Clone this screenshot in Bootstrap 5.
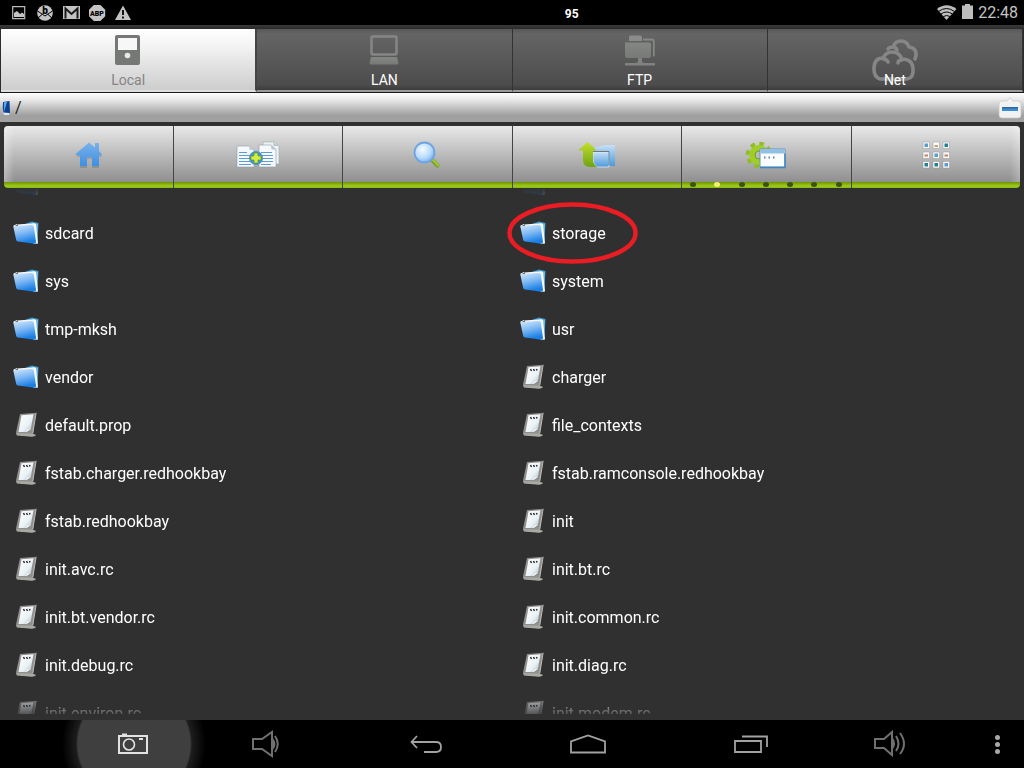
<!DOCTYPE html>
<html lang="en">
<head>
<meta charset="utf-8">
<meta name="viewport" content="width=device-width, initial-scale=1">
<title>File explorer</title>
<link href="https://cdn.jsdelivr.net/npm/bootstrap@5.3.0/dist/css/bootstrap.min.css" rel="stylesheet">
<style>
body{font-family:Roboto,"Noto Sans",sans-serif;font-size:16px;line-height:24px;color:#fff;background:#303030}
svg{display:block;flex:none}
button{border:0;padding:0;background:none;color:inherit}
.status-bar{height:25px;background:#000;color:#c4c4c4;padding:0 6px 0 11px}
.status-left{flex:0 0 55%}
.status-count{font-size:12px;font-weight:700;color:#fff;padding-top:2px}
.place-tabs{background:linear-gradient(#3a3a3a,#2c2c2c 4px,#2c2c2c);padding:4px 1px 0;border-bottom:1px solid #181818}
.place-tab{flex:1 1 0;height:63px;padding:0;font-size:14px;line-height:16px;border-right:1px solid #333;border-bottom:2px solid #999;background:linear-gradient(#575757,#656565 5px,#4c4c4c 56px,#3b3b3b)}
.place-tab.active{color:#858585;background:linear-gradient(#fff,#f2f2f2 30%,#cdcdcd);border-bottom-color:#dedede;border-right:2px solid #444}
.place-tab .glyph{height:37px}
.place-tab .tab-label{position:relative}
.path-bar{height:29px;background:linear-gradient(#fff,#e6e6e6 25%,#9f9f9f 78%,#a2a2a2);color:#222;padding:0 2px}
.tool-bar{height:62px;margin:4px 4px 0;border-radius:4px;overflow:hidden;background:linear-gradient(#e9e9e9,#8f8f8f 56px,#6f9500 56px,#9ccb1c 60px,#8ab514)}
.tool-bar button{flex:1 1 0;padding-bottom:4px;border-right:1px solid #444}
.tool-bar button:last-child{border-right:0;background:linear-gradient(90deg,transparent 94%,#ffffff40) 0 0/100% 56px no-repeat}
.tool-bar button:first-child{background:linear-gradient(90deg,#ffffff50,transparent 6%) 0 0/100% 56px no-repeat}
.pager-dots{bottom:1px;left:8px;right:9px}
.pager-dots i{width:6px;height:5px;border-radius:50%;background:#3d5210}
.pager-dots i.on{background:#f4ef72}
.file-area{margin-bottom:6px;min-height:0;padding-right:10px;-webkit-mask-image:linear-gradient(transparent,#0003 8px,#000 14px,#000 calc(100% - 26px),#0003);mask-image:linear-gradient(transparent,#0003 8px,#000 14px,#000 calc(100% - 26px),#0003)}
.file-row{height:48px;padding-left:12px}
.file-row a{color:#fff;text-decoration:none}
.file-row svg{margin:0 5px 2px 0}
.file-row.cut{height:22px;overflow:hidden}
.file-row.cut svg{margin-bottom:13px}
.file-row .ring{left:0;top:-8px;margin:0;z-index:2;pointer-events:none}
.nav-keys{height:48px;background:#000;display:grid;grid-template-columns:78fr 112fr 152fr 168fr 156fr 170fr 108fr 80fr;overflow:hidden}
.nav-keys button{height:48px}
.nav-keys .pressed{grid-column:2;background:radial-gradient(circle 76px at center,#3f3f3f 56px,#1d1d1d 58px,#000 72px);margin:0 -20px;padding-right:2px}
</style>
</head>
<body>
<svg width="0" height="0" class="position-absolute" aria-hidden="true">
<defs>
<linearGradient id="gBlue" x1="0" y1="0" x2="0.3" y2="1"><stop offset="0" stop-color="#d5e9fc"/><stop offset=".5" stop-color="#7fb9f4"/><stop offset="1" stop-color="#187fe4"/></linearGradient>
<linearGradient id="gHome" x1="0" y1="0" x2="0" y2="1"><stop offset="0" stop-color="#7ab2ea"/><stop offset="1" stop-color="#3f8fe2"/></linearGradient>
<linearGradient id="gPane" x1="0" y1="0" x2="0" y2="1"><stop offset="0" stop-color="#c5dff5"/><stop offset="1" stop-color="#4d9ada"/></linearGradient>
<linearGradient id="gGreen" x1="0" y1="0" x2="0" y2="1"><stop offset="0" stop-color="#c4e02c"/><stop offset="1" stop-color="#6ea312"/></linearGradient>
<linearGradient id="gGrey" x1="0" y1="0" x2="0" y2="1"><stop offset="0" stop-color="#858785"/><stop offset="1" stop-color="#777977"/></linearGradient>
<linearGradient id="gPaper" x1="0" y1="0" x2="1" y2="1"><stop offset="0" stop-color="#fff"/><stop offset=".6" stop-color="#eaf2f6"/><stop offset="1" stop-color="#9fb4bf"/></linearGradient>
<radialGradient id="gLens" cx=".4" cy=".35" r=".7"><stop offset="0" stop-color="#f4faff"/><stop offset=".6" stop-color="#b8dbfa"/><stop offset="1" stop-color="#6faef0"/></radialGradient>
<symbol id="folder" viewBox="0 0 28 26">
<path d="M14 3.500 20 1.500 26.500 3 25.500 22 13 18z" fill="#3f97cf"/>
<path d="M20 2.500 26 4 25 21z" fill="#6cb9e2"/>
<path d="M5 4.500 22.500 3.200 24 4 26 23.500 22 24z" fill="#f4f9fd"/>
<path d="M1.500 6 20 5Q21.500 5 21.800 6.500L24 22Q24 24 22.500 23.800L6 21.500Q4.500 21.300 4.200 20L1.500 7.500z" fill="url(#gBlue)"/>
<path d="M1.500 6 5 4.500" fill="none" stroke="#eef6fd" stroke-width="1"/>
</symbol>
<symbol id="file" viewBox="0 0 28 26">
<path d="M8 2 25 .8 23.500 3 21 21.500 24 23 22 24.500 5 23 4 20.500z" fill="#8f8f8c"/>
<path d="M9.500 3.200 21.500 2.200 18.800 17 14.500 20 6.500 20z" fill="url(#gPaper)"/>
<path d="M18.800 17Q15 17 14 20.200z" fill="#fff"/>
<path d="M4 21.300 20 21.500 24 23.300 20 24.800 5 23.500z" fill="#a9a9a6"/>
<path d="M24 1.500 20.800 21" stroke="#bdbdba" stroke-width="1"/>
</symbol>
<symbol id="script" viewBox="0 0 28 26">
<use href="#file"/>
<path d="m11.500 5 1 2m2-2 1 2m2-2 .5 1.500" stroke="#222" stroke-width="1.400"/>
</symbol>
</defs>
</svg>

<div class="d-flex flex-column vh-100 overflow-hidden">
<header class="status-bar d-flex align-items-center flex-shrink-0">
<div class="status-left d-flex align-items-center">
<svg width="125" height="20" viewBox="11 3 125 20" fill="#c4c4c4">
<path d="M12.700 6.700h12v12h-12z" fill="none" stroke="#b9b9b9" stroke-width="1.200"/><path d="M14 17v-4l3-2 3 3 2-1.500 2 1.500v3z"/>
<circle cx="45" cy="13" r="7.800"/><path d="m37.500 11 7.500 5 7.500-5M38 18l4-3.500M52 18l-4-3.500" stroke="#000" fill="none"/><text x="45" y="13.500" text-anchor="middle" font-size="10" font-weight="900" fill="#000">b</text>
<path d="M63 6h17v13H63z"/><path d="M65.500 18.500V8.500l6 5.500 6-5.500v10" fill="none" stroke="#1a1a1a" stroke-width="2"/>
<path d="M93.800 5h6.600l4.800 4.700v6.600L100.400 21h-6.600L89 16.300V9.700z"/><text x="97" y="16" text-anchor="middle" font-size="7" font-weight="900" fill="#000">ABP</text>
<path d="M123 5.500 131 20h-16z"/><path d="M123 10v5m0 1.500v2" stroke="#000" stroke-width="1.800"/>
</svg>
</div>
<span class="status-count">95</span>
<div class="ms-auto d-flex align-items-center">
<svg width="38" height="20" viewBox="935 3 38 20"><path d="M936 9Q945.500 1.500 955.500 9L945.500 20z" fill="#bdbdbd"/><path d="M937.500 11.500q8-6 16 0M940 14q5.500-4 11.500 0M942.500 16.500q3-2 6.500 0" fill="none" stroke="#000" stroke-width="1"/><path d="M961 5.500h3V4h5v1.500h3V19h-11z" fill="#bdbdbd"/></svg>
<span class="ms-1">22:48</span>
</div>
</header>

<nav class="place-tabs d-flex flex-shrink-0" aria-label="Places">
<button class="place-tab active"><span class="glyph d-flex justify-content-center pt-1"><svg width="28" height="30" viewBox="0 0 28 30"><path d="M3 0h21q2 0 2 2v26q0 2-2 2H3q-2 0-2-2V2q0-2 2-2z" fill="#767876"/><path d="M4 3h19v12H4z" fill="#f7f7f7"/><circle cx="13.500" cy="20.500" r="2.800" fill="#e9e9e9"/></svg></span><span class="tab-label d-block mt-1">Local</span></button>
<button class="place-tab"><span class="glyph d-flex justify-content-center pt-1"><svg width="30" height="30" viewBox="0 0 30 30"><rect x="2.500" y="1.500" width="25" height="18" rx="1.500" fill="none" stroke="#858785" stroke-width="2.500"/><path d="M2 22h26l1.500 6q0 1.500-1.500 1.500H2Q.5 29.500.5 28z" fill="url(#gGrey)"/></svg></span><span class="tab-label d-block mt-1">LAN</span></button>
<button class="place-tab"><span class="glyph d-flex justify-content-center pt-1"><svg width="32" height="32" viewBox="0 0 32 32"><path d="M3 6h2V2q0-1.500 2-1.500h9q2 0 2 1.500v4h-2z" fill="#8a8c8a"/><path d="M1 7.500h24q2 0 2 2V21q0 2-2 2H3q-2 0-2-2z" fill="url(#gGrey)"/><path d="M19 4.500h9q1.800 0 1.800 2v15" fill="none" stroke="#858785" stroke-width="1.800"/><path d="M14 23h4v3q0 2 2 2h11v2.500H1V28h11q2 0 2-2z" fill="#808280"/></svg></span><span class="tab-label d-block mt-1">FTP</span></button>
<button class="place-tab"><span class="glyph d-flex justify-content-center pt-2"><svg width="46" height="42" viewBox="0 0 46 42" fill="none" stroke="#868686" stroke-width="3.600" stroke-linejoin="round" stroke-linecap="round"><path d="M16 10Q17 8 21 8Q23 2 29 2Q35 2 37 8Q44 9 44 15Q44 18 43 20M21 8q3 0 4 3"/><path d="M8 40Q2 38 2 30Q2 19 11 19Q14 13 20 13Q27 13 30 20Q40 20 41 29Q42 39 35 40zM11 20q4 0 5 3M30 21q-4 0-4 3"/></svg></span><span class="tab-label d-block mt-1">Net</span></button>
</nav>

<div class="path-bar d-flex align-items-center flex-shrink-0">
<svg width="9" height="14" viewBox="0 0 9 14"><path d="M1 1 7.500 0 8 12 2 13.500Q0 7 1 1z" fill="#0d3f91"/><path d="m2 1 3 0-3 10z" fill="#56a8ee"/><path d="M1 11.500 7.500 12 7 14H2z" fill="#dce8f5"/></svg>
<span class="ms-1">/</span>
<button class="ms-auto" aria-label="Collapse"><svg width="24" height="22" viewBox="0 0 24 22"><path d="M3 4h6l3-3.500L15 4h5q3 0 3 3v11q0 3-3 3H4q-3 0-3-3V7q0-3 2-3z" fill="#f2f2f2" stroke="#c9c9c9" stroke-width=".7"/><path d="M4 10h16v4H4z" fill="#3c8dd2"/><path d="M4 10h16v1.500H4z" fill="#2f679c"/></svg></button>
</div>

<div class="tool-bar d-flex flex-shrink-0" role="toolbar" aria-label="Actions">
<button class="d-flex align-items-center justify-content-center" aria-label="Home"><svg width="28" height="28" viewBox="0 0 28 28"><path d="M2 14 15 2l6 5V2h4v8l3 4-1 1h-2v11h-7v-8q0-1-1-1h-3q-1 0-1 1v8H6V15H4z" fill="#555" opacity=".25" transform="translate(0 1)"/><path d="M1 13.500 15 1.500l6 5V2h4v8l3 3.500-1 .5h-2v11h-7v-8q0-1-1-1h-3q-1 0-1 1v8H6V14.500z" fill="url(#gHome)"/></svg></button>
<button class="d-flex align-items-center justify-content-center" aria-label="Copy"><svg width="44" height="28" viewBox="0 0 44 28"><path d="M27 1h12l4 4v18H27z" fill="#eef3f6" stroke="#9aa" stroke-width=".6"/><path d="M23 4h12l5 4.500V26H23z" fill="#f6fafc" stroke="#8e9ba6" stroke-width=".6"/><path d="m35 4 .5 4.500H40zM37 1l.5 4H43z" fill="#b9c6cf"/><path d="M1 5h12l5 4v17H1z" fill="#f4f9fc" stroke="#8e9ba6" stroke-width=".6"/><path d="m13 5 .5 4H18z" fill="#c2ced7"/><path d="M3 11.500h8M3 14.500h12M3 17.500h12M3 20.500h12M3 23.500h12M25 11.500h11M25 14.500h12M25 17.500h12M25 20.500h12M25 23.500h10" stroke="#5d9bd4" stroke-width="1"/><circle cx="20" cy="17" r="7" fill="#4b92d2"/><path d="M18 12h4v3h3v4h-3v3h-4v-3h-3v-4h3z" fill="#d3ef42" stroke="#5d9a15" stroke-width=".7"/></svg></button>
<button class="d-flex align-items-center justify-content-center" aria-label="Search"><svg width="28" height="30" viewBox="0 0 28 30"><path d="m18 19 6.500 6.500" stroke="#7ca62c" stroke-width="4.500" stroke-linecap="round"/><path d="m18.500 18.500 7 7" stroke="#a9cd40" stroke-width="1.600" stroke-linecap="round"/><circle cx="11.500" cy="12.500" r="10" fill="url(#gLens)" stroke="#6ea4e2" stroke-width="1.800"/></svg></button>
<button class="d-flex align-items-center justify-content-center" aria-label="Up one folder"><svg width="38" height="28" viewBox="0 0 38 28"><path d="M14 7 27 4h10v21h-6V9H14z" fill="url(#gPane)"/><path d="M15 11h16v15H19q-4-3-4-8z" fill="url(#gPane)" stroke="#eaf4fc" stroke-width=".7"/><path d="M15 10.500h16V24" fill="none" stroke="#59809b" stroke-width="1"/><path d="M0 9.500 9.500 1 19 9.500h-4V19q0 4 4 7h-7q-7 0-7-7V9.500z" fill="url(#gGreen)"/></svg></button>
<button class="position-relative d-flex align-items-center justify-content-center" aria-label="Settings"><svg width="42" height="28" viewBox="0 0 42 28"><circle cx="14" cy="14" r="11" fill="none" stroke="#8fbe20" stroke-width="4.500" stroke-dasharray="4.320 4.320"/><circle cx="14" cy="14" r="7" fill="none" stroke="#a0ce26" stroke-width="6"/><circle cx="14" cy="14" r="4" fill="#bbb" stroke="#6f9d1a"/><path d="M15 8h25v18H15z" fill="#fafcfe" stroke="#5e96c8"/><path d="M15.500 8h24v4.500h-24z" fill="#94bfe4"/><path d="M40 12.500v14H15" fill="none" stroke="#3f85bf" stroke-width="1.500"/><path d="M19 16.500h1.500m3 0h1.500m3 0h1.500" stroke="#6883a0" stroke-width="1.800"/></svg>
<span class="pager-dots position-absolute d-flex justify-content-between"><i></i><i class="on"></i><i></i><i></i><i></i><i></i><i></i></span></button>
<button class="d-flex align-items-center justify-content-center" aria-label="Grid view"><svg width="28" height="28" viewBox="0 0 28 28"><g fill="#f8f8f8" stroke="#848b90" stroke-width=".4"><path d="M1 1h6.500v6.500H1zM11 1h6.500v6.500H11zM21 1h6.500v6.500H21zM1 11h6.500v6.500H1zM11 11h6.500v6.500H11zM21 11h6.500v6.500H21zM1 20.500h6.500V27H1zM11 20.500h6.500V27H11zM21 20.500h6.500V27H21z"/></g><path d="M2.500 2.500h3.500v3.500H2.500zM12.500 12.500H16V16h-3.500zM22.500 22H26v3.500h-3.500z" fill="#5c9cc9"/><path d="M22.500 2.500H26v3.500h-3.500zM2.500 22H6v3.500H2.500zM12.500 22H16v3.500h-3.500z" fill="#218392"/><path d="M12.500 4H16v2h-3.500z" fill="#c2a67a"/><path d="M2.500 13.500H6v2H2.500zM22.500 13.500H26v2h-3.500z" fill="#c58160"/></svg></button>
</div>

<main class="file-area flex-grow-1 overflow-hidden">
<div class="row g-0" id="files">
<div class="col-6 file-row cut d-flex align-items-end"><svg width="28" height="26"><use href="#folder"/></svg></div>
<div class="col-6 file-row cut d-flex align-items-end"><svg width="28" height="26"><use href="#folder"/></svg></div>
</div>
</main>

<footer class="nav-keys flex-shrink-0">
<button class="pressed d-flex align-items-center justify-content-center" aria-label="Screenshot"><svg width="30" height="22" viewBox="0 0 30 22" fill="none" stroke="#e2e2e2" stroke-width="2"><path d="M1 3h28v17H1z"/><circle cx="11" cy="11.500" r="5.500" stroke-width="1.600"/><path d="M4 1.500h5M21 6h4"/></svg></button>
<button class="d-flex align-items-center justify-content-center" aria-label="Volume down"><svg width="28" height="28" viewBox="0 0 28 28" fill="none" stroke="#707070" stroke-width="2"><path d="M1 9h9l10-7v24l-10-7H1z"/><path d="M20.500 9q4 5 0 10z" fill="#707070"/><path d="M23 6q5.500 8 0 16"/></svg></button>
<button class="d-flex align-items-center justify-content-center" aria-label="Back"><svg width="32" height="18" viewBox="0 0 32 18" fill="none" stroke="#a2a2a2" stroke-width="1.800"><path d="M7 1 1.500 7 7 13M1.500 7H26q5 0 5 5t-5 5H14"/></svg></button>
<button class="d-flex align-items-center justify-content-center" aria-label="Home screen"><svg width="36" height="20" viewBox="0 0 36 20" fill="none" stroke="#a2a2a2" stroke-width="1.800"><path d="M1 18.500V7.500L18 1.500 35 7.500v11z"/></svg></button>
<button class="d-flex align-items-center justify-content-center" aria-label="Recent apps"><svg width="34" height="18" viewBox="0 0 34 18" fill="none" stroke="#a2a2a2" stroke-width="1.800"><path d="M1 6h26v11H1zM8 1.500h25V12"/></svg></button>
<button class="d-flex align-items-center justify-content-center" aria-label="Volume up"><svg width="32" height="28" viewBox="0 0 32 28" fill="none" stroke="#707070" stroke-width="2"><path d="M1 9h9l8-7v23l-8-7H1z"/><path d="M18.500 9q3 5 0 9z" fill="#707070"/><path d="M22 6q5 8 0 15M26 3q8 11 0 21"/></svg></button>
<button class="d-flex align-items-center justify-content-end pe-4" aria-label="Menu"><svg width="5" height="20" viewBox="0 0 5 20" fill="#a8a8a8"><circle cx="2.500" cy="3.500" r="2.500"/><circle cx="2.500" cy="10.500" r="2.500"/><circle cx="2.500" cy="17.500" r="2.500"/></svg></button>
</footer>
</div>

<script src="https://cdn.jsdelivr.net/npm/bootstrap@5.3.0/dist/js/bootstrap.bundle.min.js"></script>
<script>
const entries = [
  ["folder","sdcard"],["folder","storage"],["folder","sys"],["folder","system"],
  ["folder","tmp-mksh"],["folder","usr"],["folder","vendor"],["script","charger"],
  ["file","default.prop"],["script","file_contexts"],["script","fstab.charger.redhookbay"],["script","fstab.ramconsole.redhookbay"],
  ["script","fstab.redhookbay"],["script","init"],["script","init.avc.rc"],["script","init.bt.rc"],
  ["script","init.bt.vendor.rc"],["script","init.common.rc"],["script","init.debug.rc"],["script","init.diag.rc"],
  ["script","init.environ.rc"],["script","init.modem.rc"]
];
const ring = '<svg class="ring position-absolute" width="131" height="62" viewBox="0 0 131 62"><ellipse cx="65.500" cy="31" rx="63" ry="28.500" fill="none" stroke="#ea1c24" stroke-width="4.500"/></svg>';
document.getElementById("files").insertAdjacentHTML("beforeend", entries.map(([icon, name]) =>
  `<div class="col-6 file-row position-relative d-flex align-items-center"><a href="#" class="d-flex align-items-center"><svg width="28" height="26"><use href="#${icon}"/></svg>${name}</a>${name === "storage" ? ring : ""}</div>`).join(""));
</script>
</body>
</html>
